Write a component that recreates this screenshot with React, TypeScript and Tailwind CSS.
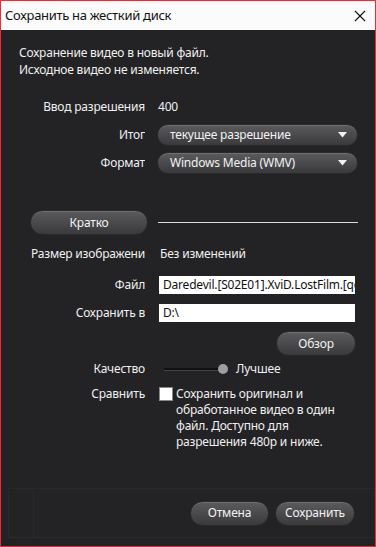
import React from 'react';

const font = { fontFamily: '"Noto Sans", "Open Sans", sans-serif' };

function PillButton({ children, className = '' }: { children: React.ReactNode; className?: string }) {
  return (
    <div
      className={
        'flex items-center rounded-full border border-[#2a2a2a] bg-gradient-to-b from-[#5b5b5d] to-[#3a3a3c] text-[#f2f2f2] shadow-[inset_0_1px_0_rgba(255,255,255,0.12)] ' +
        className
      }
    >
      {children}
    </div>
  );
}

function Select({ value }: { value: string }) {
  return (
    <PillButton className="h-[22px] w-[201px] justify-between pl-[12px] pr-[10px]">
      <span className="leading-none">{value}</span>
      <svg width="9" height="6" viewBox="0 0 9 6">
        <path d="M0 0 L9 0 L4.5 5.5 Z" fill="#f2f2f2" />
      </svg>
    </PillButton>
  );
}

function Row({ label, children, className = '' }: { label: string; children: React.ReactNode; className?: string }) {
  return (
    <div className={'flex items-center ' + className}>
      <div className="w-[144px] shrink-0 overflow-hidden whitespace-nowrap text-right">{label}</div>
      <div className="ml-[12px] flex items-center">{children}</div>
    </div>
  );
}

export default function App() {
  return (
    <div
      style={font}
      className="flex h-[547px] w-[376px] flex-col border border-[#e5303c] bg-[#232225] text-[12px] tracking-[-0.2px] text-[#f0f0f0]"
    >
      {/* Title bar */}
      <div className="flex h-[29px] shrink-0 items-center justify-between bg-[#fbfbfb] pl-[4px] pr-[9px] text-[#111]">
        <span className="text-[13px] tracking-[-0.3px]">Сохранить на жесткий диск</span>
        <svg width="12" height="12" viewBox="0 0 12 12">
          <path d="M1 1 L11 11 M11 1 L1 11" stroke="#111" strokeWidth="1.1" />
        </svg>
      </div>

      <div className="flex flex-1 flex-col">
        <div className="ml-[18px] mt-[14px] leading-[17px]">
          <div>Сохранение видео в новый файл.</div>
          <div>Исходное видео не изменяется.</div>
        </div>

        <Row label="Ввод разрешения" className="mt-[20px] h-[17px]">
          <span className="ml-[1px]">400</span>
        </Row>

        <Row label="Итог" className="mt-[9px]">
          <Select value="текущее разрешение" />
        </Row>
        <Row label="Формат" className="mt-[6px]">
          <Select value="Windows Media (WMV)" />
        </Row>

        <div className="mt-[36px] flex items-center">
          <PillButton className="ml-[29px] h-[25px] w-[118px] justify-center">Кратко</PillButton>
          <div className="ml-[10px] h-px w-[200px] bg-[#d8d8d8]" />
        </div>

        <Row label="Размер изображени" className="mt-[10px] h-[17px]">
          <span className="ml-[3px]">Без изменений</span>
        </Row>

        <Row label="Файл" className="mt-[14px]">
          <div className="ml-[2px] h-[18px] w-[196px] overflow-hidden whitespace-nowrap bg-white pl-[4px] leading-[18px] text-[#111]">
            Daredevil.[S02E01].XviD.LostFilm.[qo
          </div>
        </Row>
        <Row label="Сохранить в" className="mt-[10px]">
          <div className="ml-[2px] h-[18px] w-[196px] bg-white pl-[4px] leading-[18px] text-[#111]">D:\</div>
        </Row>

        <div className="mt-[9px] flex justify-end pr-[19px]">
          <PillButton className="h-[25px] w-[80px] justify-center">Обзор</PillButton>
        </div>

        <Row label="Качество" className="mt-[6px] h-[14px]">
          <div className="relative ml-[7px] flex h-[10px] w-[64px] items-center">
            <div className="h-[2px] w-full rounded bg-[#111] shadow-[0_1px_0_rgba(255,255,255,0.15)]" />
            <div className="absolute right-0 top-0 h-[10px] w-[10px] rounded-full bg-[#9e9e9e]" />
          </div>
          <span className="ml-[8px]">Лучшее</span>
        </Row>

        <div className="mt-[10px] flex items-start">
          <div className="w-[144px] shrink-0 text-right leading-[16px]">Сравнить</div>
          <div className="ml-[14px] mt-[1px] h-[14px] w-[14px] shrink-0 border border-[#888] bg-white" />
          <div className="ml-[3px] w-[185px] leading-[16px]">
            Сохранить оригинал и обработанное видео в один файл. Доступно для разрешения 480p и ниже.
          </div>
        </div>

        {/* Bottom panel */}
        <div className="mb-[8px] ml-[7px] mt-auto flex h-[50px] items-center border border-[#29282b]">
          <div className="h-full w-[25px] border-r border-[#29282b]" />
          <div className="flex flex-1 items-center justify-end pr-[19px]">
            <PillButton className="h-[25px] w-[79px] justify-center">Отмена</PillButton>
            <PillButton className="ml-[6px] h-[25px] w-[80px] justify-center">Сохранить</PillButton>
          </div>
        </div>
      </div>
    </div>
  );
}
